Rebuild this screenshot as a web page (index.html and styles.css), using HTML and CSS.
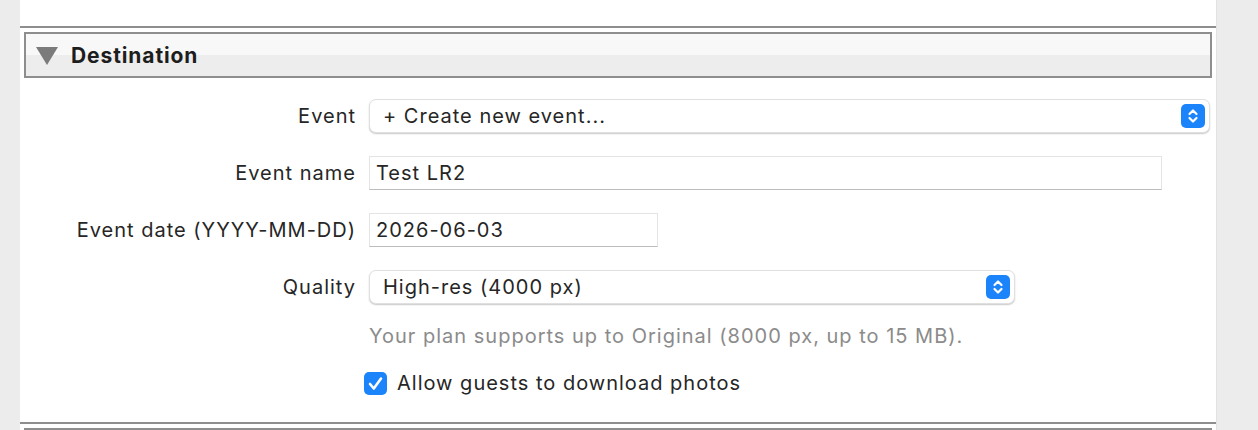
FILE: index.html
```html
<!DOCTYPE html>
<html lang="en">
<head>
    <meta charset="UTF-8">
    <meta name="viewport" content="width=device-width, initial-scale=1.0">
    <title>Export - Destination</title>
    <link rel="stylesheet" href="styles.css">
</head>
<body>
    <div class="panel">
        <div class="top-space"></div>

        <div class="section">
            <div class="section-header">
                <svg class="disclosure" width="22" height="18" viewBox="0 0 22 18">
                    <polygon points="0,0 22,0 11,18" fill="#7b7b7b" />
                </svg>
                <span class="section-title">Destination</span>
            </div>

            <div class="form">
                <label class="field-label">Event</label>
                <div class="control popup popup-wide">
                    <span class="popup-text">+ Create new event...</span>
                    <span class="stepper">
                        <svg width="24" height="24" viewBox="0 0 24 24">
                            <path d="M8.5 10 L12 6.5 L15.5 10 M8.5 14 L12 17.5 L15.5 14" fill="none" stroke="white" stroke-width="2.2" stroke-linecap="round" stroke-linejoin="round" />
                        </svg>
                    </span>
                </div>

                <label class="field-label" for="eventName">Event name</label>
                <input class="control text-field name-field" id="eventName" type="text" value="Test LR2">

                <label class="field-label" for="eventDate">Event date (YYYY-MM-DD)</label>
                <input class="control text-field date-field" id="eventDate" type="text" value="2026-06-03">

                <label class="field-label">Quality</label>
                <div class="control popup popup-quality">
                    <span class="popup-text">High-res (4000 px)</span>
                    <span class="stepper">
                        <svg width="24" height="24" viewBox="0 0 24 24">
                            <path d="M8.5 10 L12 6.5 L15.5 10 M8.5 14 L12 17.5 L15.5 14" fill="none" stroke="white" stroke-width="2.2" stroke-linecap="round" stroke-linejoin="round" />
                        </svg>
                    </span>
                </div>

                <div></div>
                <p class="hint">Your plan supports up to Original (8000 px, up to 15 MB).</p>

                <div></div>
                <label class="check-row">
                    <span class="checkbox">
                        <svg width="23" height="23" viewBox="0 0 23 23">
                            <path d="M6 12 L9.8 16.5 L17 6.5" fill="none" stroke="white" stroke-width="2.6" stroke-linecap="round" stroke-linejoin="round" />
                        </svg>
                    </span>
                    <span>Allow guests to download photos</span>
                </label>
            </div>
        </div>

        <div class="section">
            <div class="section-header"></div>
        </div>
    </div>
</body>
</html>
```

FILE: styles.css
```css
body {
    margin: 0;
    background-color: #ececec;
    font-family: Inter, "Noto Sans", sans-serif;
    font-size: 20px;
    letter-spacing: 1px;
    color: #262626;
    overflow: hidden;
}
.panel {
    margin-left: 20px;
    width: 1196px;
    min-height: 430px;
    background-color: white;
    border-right: 1px solid #e2e2e2;
}
.top-space {
    height: 26px;
}
.section {
    border-top: 2px solid #8e8e8e;
    padding-top: 4px;
}
.section-header {
    margin: 0 4px;
    height: 42px;
    border: 2px solid #8e8e8e;
    background: linear-gradient(#f8f8f8 0, #f8f8f8 50%, #ededed 50%, #ededed 100%);
    display: flex;
    align-items: center;
}
.disclosure {
    margin-left: 10px;
    margin-top: 2px;
}
.section-title {
    margin-left: 13px;
    font-weight: 700;
    font-size: 21px;
    letter-spacing: 0.9px;
    color: #1d1d1d;
}
.form {
    display: grid;
    grid-template-columns: 336px 1fr;
    column-gap: 13px;
    row-gap: 23px;
    padding: 21px 0 27px;
    align-items: center;
}
.field-label {
    text-align: right;
}
.control {
    box-sizing: border-box;
    height: 34px;
    font-family: inherit;
    font-size: 20px;
    letter-spacing: 1px;
    color: #262626;
}
.popup {
    display: flex;
    align-items: center;
    justify-content: space-between;
    background: white;
    border: 1px solid #e0e0e0;
    border-radius: 7px;
    box-shadow: 0 1px 1.5px rgba(0, 0, 0, 0.22);
    padding: 0 4px 0 13px;
}
.popup-wide {
    width: 841px;
}
.popup-quality {
    width: 646px;
}
.stepper {
    width: 24px;
    height: 24px;
    border-radius: 5px;
    background-color: #1c84fa;
    display: flex;
}
.text-field {
    border: 1px solid #e4e4e4;
    border-bottom: 1px solid #bdbdbd;
    padding: 0 6px;
    outline: none;
    background: white;
}
.name-field {
    width: 793px;
}
.date-field {
    width: 289px;
}
.hint {
    margin: -3px 0 0;
    color: #8b8b8b;
}
.check-row {
    display: flex;
    align-items: center;
    gap: 10px;
    margin-left: -5px;
    margin-top: 0;
}
.checkbox {
    width: 23px;
    height: 23px;
    border-radius: 5px;
    background-color: #1c84fa;
    display: flex;
}
```
